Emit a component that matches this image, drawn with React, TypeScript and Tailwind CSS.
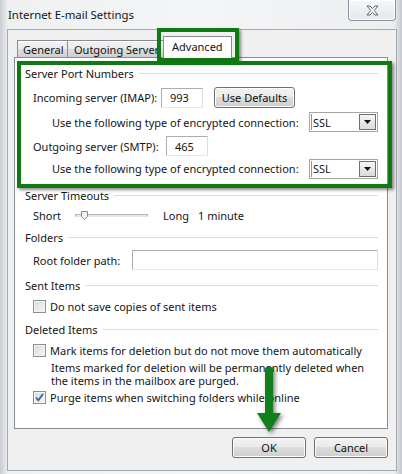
import React from 'react';

const btn =
	'flex items-center justify-center rounded-[3px] border border-[#707070] bg-[linear-gradient(#f2f2f2,#ebebeb_45%,#dddddd_50%,#cfcfcf)] shadow-[inset_0_0_0_1px_#fcfcfc] text-[#111]';

const GroupHeading = ({ title }: { title: string }) => (
	<div className="flex h-[16px] items-center">
		<span>{title}</span>
		<div className="ml-[5px] h-px flex-1 bg-[#d5dfe5]" />
	</div>
);

const TextBox = ({ value, className }: { value?: string; className: string }) => (
	<div
		className={`flex items-center border border-[#abadb3] border-r-[#dbdfe6] border-b-[#e3e9ef] bg-white pl-[8px] ${className}`}
	>
		{value}
	</div>
);

const Select = () => (
	<div className="ml-auto flex h-[20px] w-[69px] shrink-0 items-center border border-[#a5a5a5] bg-white pr-[1px]">
		<div className="ml-[1px] h-[16px] w-px bg-[#6e9bd6]" />
		<span className="ml-[1px] flex-1">SSL</span>
		<div className="flex h-[16px] w-[17px] items-center justify-center border border-[#6f6f6f] bg-[linear-gradient(#f4f4f4,#dcdcdc)]">
			<svg width="7" height="4" viewBox="0 0 7 4">
				<path d="M0 0h7L3.5 4z" fill="#111" />
			</svg>
		</div>
	</div>
);

const Checkbox = ({ checked }: { checked?: boolean }) => (
	<div className="flex h-[13px] w-[13px] shrink-0 items-center justify-center border border-[#8e8f8f] bg-[linear-gradient(135deg,#d9d9d9,#f6f6f6)] shadow-[inset_0_0_0_1px_#f4f4f4]">
		{checked && (
			<svg width="9" height="9" viewBox="0 0 9 9">
				<path d="M1 4.5l2.3 2.8L8 1" fill="none" stroke="#3b5fa3" strokeWidth="1.8" />
			</svg>
		)}
	</div>
);

export default function App() {
	return (
		<div className="relative h-[474px] w-[402px] overflow-hidden whitespace-nowrap bg-[linear-gradient(90deg,#c9ccd0,#eef0f2_2%,#f3f5f7_50%,#eceef1_98%,#c4c7cb)] font-['Noto_Sans',sans-serif] text-[11px] leading-none text-[#151515]">
			{/* title bar */}
			<div className="flex h-[29px] justify-between pl-[8px] pr-[6px]">
				<div className="pt-[9px] text-[11.4px]">Internet E-mail Settings</div>
				<div className="flex h-[21px] w-[48px] items-center justify-center rounded-b-[4px] border border-t-0 border-[#8b939e] bg-[linear-gradient(#f6f7f9,#e4e7eb)] shadow-[inset_0_0_0_1px_#ffffff]">
					<svg width="15" height="11" viewBox="0 0 15 11">
						<path
							d="M2 1h3l2.5 2.6L10 1h3L9.2 5.5 13 10h-3L7.5 7.3 5 10H2l3.8-4.5z"
							fill="#ffffff"
							stroke="#5b6470"
							strokeWidth="1"
							strokeLinejoin="round"
						/>
					</svg>
				</div>
			</div>

			{/* client area */}
			<div className="ml-[7px] mr-[5px] flex h-[442px] flex-col border border-[#a3a9b1] bg-[#f0f0f0]">
				{/* tabs */}
				<div className="ml-[9px] mt-[6px] flex h-[21px] items-end">
					<div className="flex h-[17px] w-[51px] items-center border border-b-0 border-[#898c95] bg-[linear-gradient(#f2f2f2,#ebebeb_50%,#dddddd_50%,#cfcfcf)] pl-[5px] shadow-[inset_0_1px_0_#fff]">
						General
					</div>
					<div className="flex h-[17px] w-[97px] items-center overflow-hidden border border-b-0 border-l-0 border-[#898c95] bg-[linear-gradient(#f2f2f2,#ebebeb_50%,#dddddd_50%,#cfcfcf)] pl-[6px] shadow-[inset_0_1px_0_#fff]">
						Outgoing Server
					</div>
					<div className="relative z-10 -mb-px -ml-[2px] flex h-[22px] w-[69px] items-center border border-b-0 border-[#898c95] bg-white pb-[3px] pl-[8px]">
						Advanced
					</div>
				</div>

				{/* panel */}
				<div className="ml-[6px] mr-[8px] flex h-[372px] flex-col border border-[#898c95] bg-white pl-[10px] pr-[9px] pt-[7px]">
					<GroupHeading title="Server Port Numbers" />
					<div className="mt-[6px] flex h-[21px] items-center pl-[8px]">
						<span className="w-[128px]">Incoming server (IMAP):</span>
						<TextBox value="993" className="h-[20px] w-[42px]" />
						<div className={`${btn} ml-[11px] h-[21px] w-[81px]`}>Use Defaults</div>
					</div>
					<div className="mt-[4px] flex h-[20px] items-center pl-[27px]">
						<span>Use the following type of encrypted connection:</span>
						<Select />
					</div>
					<div className="mt-[4px] flex h-[20px] items-center pl-[8px]">
						<span className="w-[133px]">Outgoing server (SMTP):</span>
						<TextBox value="465" className="h-[20px] w-[42px]" />
					</div>
					<div className="mt-[2px] flex h-[21px] items-center pl-[27px]">
						<span>Use the following type of encrypted connection:</span>
						<Select />
					</div>

					<div className="mt-[8px]">
						<GroupHeading title="Server Timeouts" />
					</div>
					<div className="mt-[4px] flex h-[16px] items-center pl-[8px]">
						<span className="w-[42px]">Short</span>
						<div className="relative h-[3px] w-[73px] border border-[#b5b5b5] border-b-[#e6e6e6] bg-[#e7e7e7]">
							<svg className="absolute left-[5px] top-[-4px]" width="7" height="9" viewBox="0 0 7 9">
								<path d="M0.5 0.5h6v5L3.5 8.5 0.5 5.5z" fill="#f3f3f3" stroke="#8a8a8a" />
							</svg>
						</div>
						<span className="ml-[15px]">Long</span>
						<span className="ml-[9px]">1 minute</span>
					</div>

					<div className="mt-[6px]">
						<GroupHeading title="Folders" />
					</div>
					<div className="mt-[5px] flex h-[20px] items-center pl-[8px]">
						<span className="w-[99px]">Root folder path:</span>
						<TextBox className="h-[20px] flex-1" />
					</div>

					<div className="mt-[7px]">
						<GroupHeading title="Sent Items" />
					</div>
					<div className="mt-[5px] flex h-[16px] items-center gap-[4px] pl-[8px]">
						<Checkbox />
						<span>Do not save copies of sent items</span>
					</div>

					<div className="mt-[7px]">
						<GroupHeading title="Deleted Items" />
					</div>
					<div className="mt-[5px] flex h-[16px] items-center gap-[4px] pl-[8px]">
						<Checkbox />
						<span>Mark items for deletion but do not move them automatically</span>
					</div>
					<div className="mt-[3px] flex flex-col pl-[26px]">
						<span className="h-[13px] leading-[13px]">Items marked for deletion will be permanently deleted when</span>
						<span className="h-[13px] leading-[13px]">the items in the mailbox are purged.</span>
					</div>
					<div className="mt-[2px] flex h-[16px] items-center gap-[4px] pl-[8px]">
						<Checkbox checked />
						<span>Purge items when switching folders while online</span>
					</div>
				</div>

				{/* buttons */}
				<div className="mr-[8px] mt-[8px] flex justify-end gap-[8px]">
					<div className={`${btn} h-[21px] w-[74px]`}>OK</div>
					<div className={`${btn} h-[21px] w-[74px]`}>Cancel</div>
				</div>
			</div>

			{/* annotations */}
			<div className="absolute left-[157px] top-[28px] h-[34px] w-[82px] border-4 border-[#0f7a12] shadow-[2px_2px_3px_rgba(0,0,0,0.45)]" />
			<div className="absolute left-[17px] top-[61px] h-[127px] w-[375px] border-4 border-[#0f7a12] shadow-[2px_2px_3px_rgba(0,0,0,0.45)]" />
			<svg
				className="absolute left-[255px] top-[366px] drop-shadow-[2px_2px_2px_rgba(0,0,0,0.5)]"
				width="30"
				height="70"
				viewBox="0 0 30 70"
			>
				<path d="M10 3q0-2 2-2h4q2 0 2 2v44h8L14 66 2 47h8z" fill="#11801a" />
			</svg>
		</div>
	);
}
